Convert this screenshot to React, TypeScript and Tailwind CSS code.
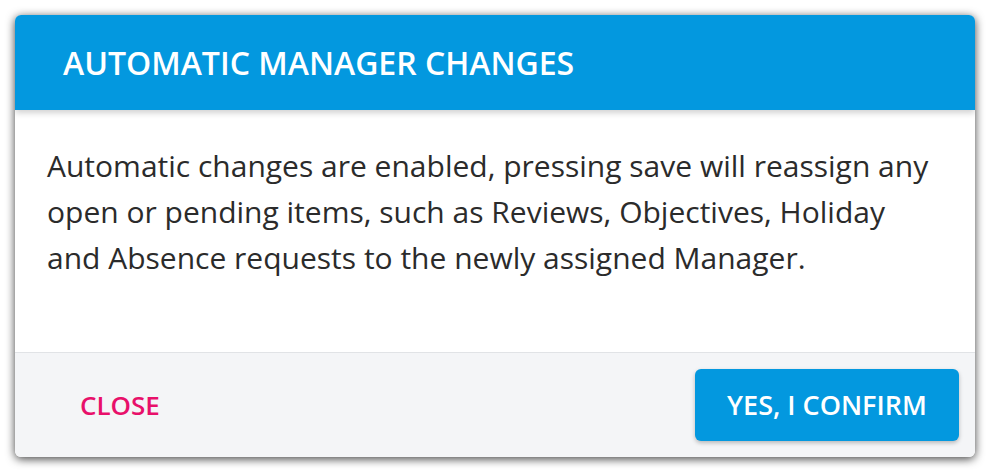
export default function App() {
  return (
    <div className="w-[992px] h-[476px] bg-white pt-[15px] pl-[15px]" style={{ fontFamily: '"Open Sans", "Noto Sans", sans-serif' }}>
      <div className="w-[960px] h-[442px] flex flex-col rounded-[6px] overflow-hidden bg-white shadow-[0_2px_10px_rgba(0,0,0,0.75)]">
        <div className="h-[95px] shrink-0 bg-[#0398df] flex items-center pl-[48px] shadow-[0_3px_6px_rgba(0,0,0,0.18)] relative z-10">
          <h1 className="text-white text-[32px] font-semibold tracking-normal leading-none">AUTOMATIC MANAGER CHANGES</h1>
        </div>
        <div className="flex-1 px-[32px] pt-[33px]">
          <p className="text-[#2b2b2b] text-[30px] leading-[46px]">
            Automatic changes are enabled, pressing save will reassign any open or pending items, such as Reviews, Objectives, Holiday and Absence requests to the newly assigned Manager.
          </p>
        </div>
        <div className="h-[105px] shrink-0 bg-[#f4f5f7] border-t border-[#e1e3e6] flex items-center justify-between pl-[50px] pr-[16px]">
          <button className="text-[#e8106a] text-[26px] font-semibold px-[15px] py-[10px]">CLOSE</button>
          <button className="w-[264px] h-[72px] rounded-[6px] bg-[#0398df] text-white text-[27px] font-semibold shadow-[0_2px_4px_rgba(0,0,0,0.25)]">YES, I CONFIRM</button>
        </div>
      </div>
    </div>
  );
}
